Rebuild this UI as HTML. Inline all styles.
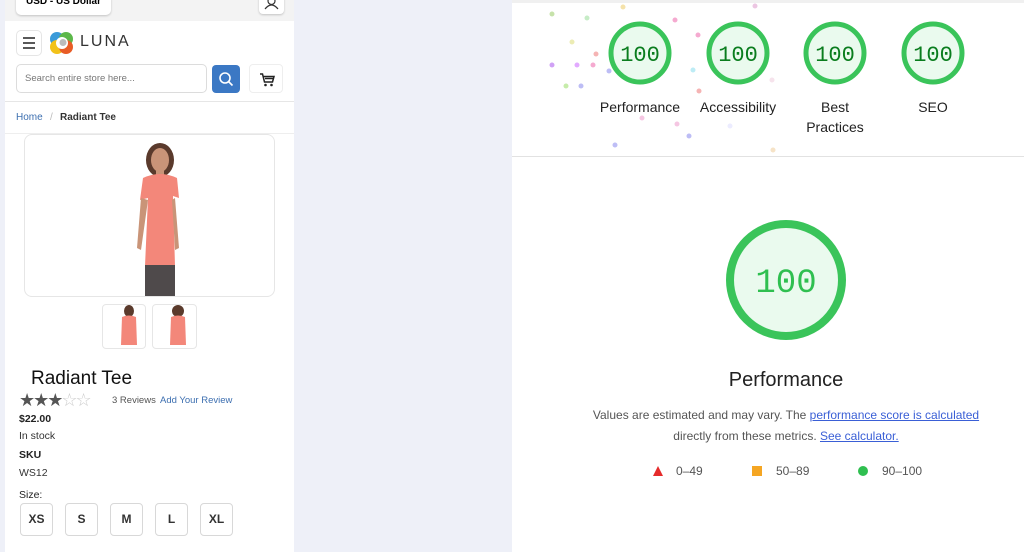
<!DOCTYPE html>
<html><head><meta charset="utf-8"><style>
*{margin:0;padding:0;box-sizing:border-box}
body{width:1024px;height:552px;overflow:hidden;background:#eef0f8;font-family:"Liberation Sans",sans-serif;position:relative}
.a{position:absolute}
#left{left:5px;top:0;width:289px;height:552px;background:#fff}
#right{left:512px;top:0;width:512px;height:552px;background:#fff}
.t{position:absolute;white-space:nowrap}
.sz{position:absolute;top:503px;width:33px;height:33px;border:1.5px solid #d8d8d8;border-radius:4px;font-size:12px;font-weight:bold;color:#333;text-align:center;line-height:30px}
.lbl{position:absolute;font-size:14px;color:#222;text-align:center;width:110px;line-height:20px}
</style></head><body>
<div id="left" class="a">
  <div class="a" style="left:0;top:0;width:289px;height:21px;background:#f3f3f3"></div>
  <div class="a" style="left:11px;top:-6px;width:95px;height:21px;background:#fff;border-radius:5px;box-shadow:0 1px 2px rgba(0,0,0,.2);font-size:10px;font-weight:bold;text-align:center;line-height:16px">USD - US Dollar</div>
  <div class="a" style="left:254px;top:-6px;width:25px;height:20px;background:#fff;border-radius:4px;box-shadow:0 1px 2px rgba(0,0,0,.2)">
    <svg width="25" height="20"><circle cx="12.5" cy="7" r="3.5" fill="none" stroke="#333" stroke-width="1.2"/><path d="M6 15 Q12.5 7 19 15" fill="none" stroke="#333" stroke-width="1.2"/></svg></div>
  <div class="a" style="left:11px;top:30px;width:26px;height:26px;border:1px solid #e5e5e5;border-radius:5px">
    <svg width="24" height="24"><path d="M6 7h12M6 12h12M6 17h12" stroke="#222" stroke-width="1.5"/></svg></div>
  <svg class="a" style="left:44px;top:31px" width="26" height="24"><circle cx="8" cy="8" r="7" fill="#3a9ad9"/><circle cx="17" cy="8" r="7" fill="#5cb84a"/><circle cx="8" cy="16" r="7" fill="#f2c21a"/><circle cx="17" cy="16" r="7" fill="#e85c26"/><circle cx="13" cy="12" r="6" fill="#fff"/><circle cx="14" cy="11.5" r="3.5" fill="#bbb"/></svg>
  <div class="t" style="left:75px;top:33px;font-size:16px;letter-spacing:2px;color:#333">LUNA</div>
  <div class="a" style="left:11px;top:64px;width:191px;height:29px;border:1px solid #dcdcdc;border-radius:5px;font-size:9.5px;color:#777;line-height:27px;padding-left:8px">Search entire store here...</div>
  <div class="a" style="left:207px;top:65px;width:28px;height:28px;background:#3b78c4;border-radius:4px">
    <svg width="28" height="28"><circle cx="13" cy="13" r="5" fill="none" stroke="#fff" stroke-width="1.6"/><path d="M16.5 16.5l4 4" stroke="#fff" stroke-width="1.6"/></svg></div>
  <div class="a" style="left:244px;top:64px;width:34px;height:29px;border:1px solid #eee;border-radius:4px">
    <svg width="34" height="29"><path d="M10 9h2.5l2 8h8l1.5-5.5h-10.5M15 13.5h8" fill="none" stroke="#222" stroke-width="1.5"/><circle cx="15.5" cy="20" r="1.3" fill="#222"/><circle cx="21.5" cy="20" r="1.3" fill="#222"/></svg></div>
  <div class="a" style="left:0;top:101px;width:289px;height:1px;background:#e6e6e6"></div>
  <div class="t" style="left:11px;top:112px;font-size:10px;color:#3d6fb0">Home</div>
  <div class="t" style="left:45px;top:112px;font-size:10px;color:#bbb">/</div>
  <div class="t" style="left:55px;top:112px;font-size:10px;color:#333;font-weight:bold">Radiant Tee</div>
  <div class="a" style="left:0;top:133px;width:289px;height:1px;background:#eee"></div>
  <div class="a" style="left:19px;top:134px;width:251px;height:163px;border:1px solid #e6e6e6;border-radius:8px"></div>
  <svg class="a" style="left:110px;top:138px" width="80" height="158">
    <ellipse cx="45" cy="22" rx="14" ry="17" fill="#5a3a2c"/>
    <ellipse cx="45" cy="22" rx="9" ry="12" fill="#c99478"/>
    <rect x="41" y="30" width="8" height="10" fill="#c99478"/>
    <path d="M28 40 Q45 32 62 40 L64 60 L58 58 L60 128 L30 128 L33 60 L25 62 Z" fill="#f3877a"/>
    <path d="M26 60 L22 110 L26 112 L33 62Z M60 60 L64 110 L60 112 L57 62Z" fill="#c99478"/>
    <rect x="30" y="127" width="30" height="31" fill="#4f4a4b"/>
  </svg>
  <div class="a" style="left:97px;top:304px;width:44px;height:45px;border:1px solid #e6e6e6;border-radius:4px"></div>
  <div class="a" style="left:147px;top:304px;width:45px;height:45px;border:1px solid #e6e6e6;border-radius:4px"></div>
  <svg class="a" style="left:110px;top:305px" width="80" height="43">
    <ellipse cx="14" cy="6" rx="5" ry="6" fill="#5a3a2c"/><path d="M7 12 Q14 9 21 12 L22 40 L6 40Z" fill="#f3877a"/>
    <ellipse cx="63" cy="6" rx="6" ry="6" fill="#5a3a2c"/><path d="M56 12 Q63 9 70 12 L71 40 L55 40Z" fill="#f3877a"/>
  </svg>
  <div class="t" style="left:26px;top:368px;font-size:19px;color:#111">Radiant Tee</div>
  <div class="t" style="left:14px;top:390px;font-size:18px;color:#555;letter-spacing:-2px">★★★<span style="color:#ccc">☆☆</span></div>
  <div class="t" style="left:107px;top:395px;font-size:9.5px;color:#555">3 Reviews</div>
  <div class="t" style="left:155px;top:395px;font-size:9.5px;color:#3d6fb0">Add Your Review</div>
  <div class="t" style="left:14px;top:413px;font-size:10.5px;font-weight:bold;color:#222">$22.00</div>
  <div class="t" style="left:14px;top:430px;font-size:10.5px;color:#333">In stock</div>
  <div class="t" style="left:14px;top:449px;font-size:10.5px;font-weight:bold;color:#222">SKU</div>
  <div class="t" style="left:14px;top:467px;font-size:10.5px;color:#333">WS12</div>
  <div class="t" style="left:14px;top:489px;font-size:10.5px;color:#222">Size:</div>
  <div class="sz" style="left:15px">XS</div><div class="sz" style="left:60px">S</div><div class="sz" style="left:105px">M</div><div class="sz" style="left:150px">L</div><div class="sz" style="left:195px">XL</div>
</div>
<div id="right" class="a">
  <div class="a" style="left:0;top:0;width:512px;height:3px;background:#f0f0f0"></div>
  <div class="a" style="left:0;top:156px;width:512px;height:1px;background:#e2e2e2"></div>
  <svg class="a" style="left:0;top:0" width="512" height="552">
    <g opacity=".55">
      <circle cx="40" cy="14" r="2.5" fill="#9c6"/><circle cx="65" cy="65" r="2.5" fill="#c6f"/><circle cx="81" cy="65" r="2.5" fill="#e6a"/><circle cx="60" cy="42" r="2.5" fill="#dd7"/><circle cx="84" cy="54" r="2.5" fill="#e77"/><circle cx="40" cy="65" r="2.5" fill="#a5e"/><circle cx="54" cy="86" r="2.5" fill="#9d6"/><circle cx="69" cy="86" r="2.5" fill="#88e"/><circle cx="111" cy="7" r="2.5" fill="#ec6"/><circle cx="163" cy="20" r="2.5" fill="#e6a"/><circle cx="186" cy="35" r="2.5" fill="#e6a"/><circle cx="187" cy="91" r="2.5" fill="#e77"/><circle cx="97" cy="71" r="2.5" fill="#88e"/><circle cx="130" cy="118" r="2.5" fill="#e9c"/><circle cx="165" cy="124" r="2.5" fill="#e9c"/><circle cx="218" cy="126" r="2.5" fill="#ddf"/><circle cx="103" cy="145" r="2.5" fill="#88e"/><circle cx="260" cy="80" r="2.5" fill="#ecd"/><circle cx="243" cy="6" r="2.5" fill="#d9c"/><circle cx="75" cy="18" r="2.5" fill="#9d9"/><circle cx="181" cy="70" r="2.5" fill="#8de"/><circle cx="261" cy="150" r="2.5" fill="#ec9"/><circle cx="177" cy="136" r="2.5" fill="#88e"/></g>
    <g fill="#eafaee" stroke="#3ac45a" stroke-width="5">
      <circle cx="128" cy="53" r="29"/><circle cx="226" cy="53" r="29"/><circle cx="323" cy="53" r="29"/><circle cx="421" cy="53" r="29"/>
      <circle cx="274" cy="280" r="56" stroke-width="8"/></g>
    <g font-family="Liberation Mono,monospace" font-size="22" fill="#0a7d1e" text-anchor="middle">
      <text x="128" y="61">100</text><text x="226" y="61">100</text><text x="323" y="61">100</text><text x="421" y="61">100</text></g>
    <text x="274" y="292" text-anchor="middle" font-family="Liberation Mono,monospace" font-size="34" fill="#2fbf50">100</text>
  </svg>
  <div class="lbl" style="left:73px;top:97px">Performance</div>
  <div class="lbl" style="left:171px;top:97px">Accessibility</div>
  <div class="lbl" style="left:268px;top:97px">Best<br>Practices</div>
  <div class="lbl" style="left:366px;top:97px">SEO</div>
  <div class="t" style="left:0;width:548px;text-align:center;top:369px;font-size:20px;color:#222">Performance</div>
  <div class="t" style="left:0;width:548px;text-align:center;top:408px;font-size:12px;color:#555">Values are estimated and may vary. The <span style="color:#3a5fd6;text-decoration:underline">performance score is calculated</span></div>
  <div class="t" style="left:0;width:548px;text-align:center;top:429px;font-size:12px;color:#555">directly from these metrics. <span style="color:#3a5fd6;text-decoration:underline">See calculator.</span></div>
  <svg class="a" style="left:140px;top:464px" width="220" height="14"><path d="M1 12 L6 2 L11 12Z" fill="#e52b2b"/><rect x="100" y="2" width="10" height="10" fill="#f5a623"/><circle cx="211" cy="7" r="5" fill="#2fbf50"/></svg>
  <div class="t" style="left:164px;top:464px;font-size:12px;color:#555">0–49</div>
  <div class="t" style="left:264px;top:464px;font-size:12px;color:#555">50–89</div>
  <div class="t" style="left:370px;top:464px;font-size:12px;color:#555">90–100</div>
</div>
</body></html>
